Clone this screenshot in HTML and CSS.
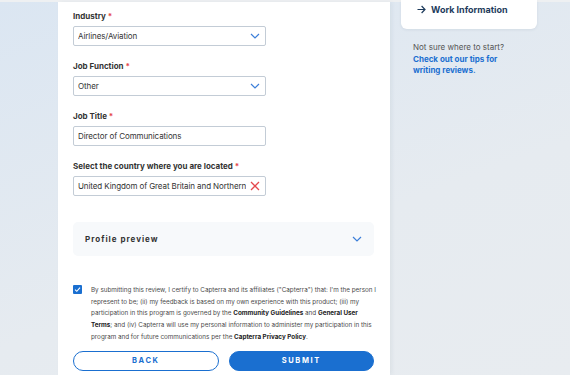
FILE: index.html
```html
<!DOCTYPE html>
<html lang="en">
<head>
<meta charset="utf-8">
<title>Review - Work Information</title>
<link rel="stylesheet" href="styles.css">
</head>
<body>
<div class="page">
  <div class="gutter"></div>
  <main class="panel">
    <div class="field">
      <label class="label">Industry <span class="req">*</span></label>
      <div class="input">
        <span class="value">Airlines/Aviation</span>
        <svg class="chev" width="10" height="6" viewBox="0 0 10 6"><path d="M1 1 L5 5 L9 1" fill="none" stroke="#3d7fd9" stroke-width="1.2"/></svg>
      </div>
    </div>
    <div class="field">
      <label class="label">Job Function <span class="req">*</span></label>
      <div class="input">
        <span class="value">Other</span>
        <svg class="chev" width="10" height="6" viewBox="0 0 10 6"><path d="M1 1 L5 5 L9 1" fill="none" stroke="#3d7fd9" stroke-width="1.2"/></svg>
      </div>
    </div>
    <div class="field">
      <label class="label">Job Title <span class="req">*</span></label>
      <div class="input">
        <span class="value">Director of Communications</span>
      </div>
    </div>
    <div class="field">
      <label class="label">Select the country where you are located <span class="req">*</span></label>
      <div class="input">
        <span class="value clip">United Kingdom of Great Britain and Northern Ireland</span>
        <svg class="clear" width="10" height="10" viewBox="0 0 10 10"><path d="M1 1 L9 9 M9 1 L1 9" fill="none" stroke="#e5484d" stroke-width="1.3"/></svg>
      </div>
    </div>

    <div class="preview">
      <span class="preview-title">Profile preview</span>
      <svg width="10" height="6" viewBox="0 0 10 6"><path d="M1 1 L5 5 L9 1" fill="none" stroke="#3d7fd9" stroke-width="1.2"/></svg>
    </div>

    <div class="consent">
      <span class="check">
        <svg width="9" height="9" viewBox="0 0 9 9"><path d="M2 4.6 L3.8 6.3 L7 2.6" fill="none" stroke="#fff" stroke-width="1.1"/></svg>
      </span>
      <p class="consent-text">By submitting this review, I certify to Capterra and its affiliates ("Capterra") that: I'm the person I<br>represent to be; (ii) my feedback is based on my own experience with this product; (iii) my<br>participation in this program is governed by the <b>Community Guidelines</b> and <b>General User</b><br><b>Terms</b>; and (iv) Capterra will use my personal information to administer my participation in this<br>program and for future communications per the <b>Capterra Privacy Policy</b>.</p>
    </div>

    <div class="actions">
      <button class="btn btn-back">BACK</button>
      <button class="btn btn-submit">SUBMIT</button>
    </div>
  </main>
  <aside class="side">
    <div class="card">
      <svg class="arrow" width="9" height="9" viewBox="0 0 9 9"><path d="M0.5 4.5 H8 M4.6 1 L8 4.5 L4.6 8" fill="none" stroke="#1d3b5c" stroke-width="1.2"/></svg>
      <span class="card-text">Work Information</span>
    </div>
    <div class="tips">
      <p class="tips-q">Not sure where to start?</p>
      <a class="tips-link" href="#">Check out our tips for writing reviews.</a>
    </div>
  </aside>
</div>
</body>
</html>
```

FILE: styles.css
```css
* { box-sizing: border-box; }
html, body { margin: 0; padding: 0; }
body {
  width: 570px;
  height: 375px;
  overflow: hidden;
  font-family: Inter, "Noto Sans", "Liberation Sans", sans-serif;
  background: linear-gradient(160deg, #dbe6f2 0%, #e6ebf0 60%, #e8ecf0 100%);
  color: #2b2b2b;
}
.page {
  display: flex;
  height: 375px;
  border-top: 2px solid #eef0f2;
}
.gutter { width: 58px; flex: none; }
.panel {
  width: 332px;
  flex: none;
  background: #fff;
  padding: 9px 16px 0 15px;
  box-shadow: 2px 0 4px rgba(40, 60, 90, 0.06);
}
.field { margin-bottom: 15px; }
.label {
  display: block;
  font-size: 8px;
  font-weight: 700;
  line-height: 11px;
  color: #333;
  margin-bottom: 4px;
}
.req { color: #e5484d; }
.input {
  width: 193px;
  height: 20px;
  border: 1px solid #c3ccd6;
  border-radius: 2px;
  display: flex;
  align-items: center;
  padding: 0 4px 0 4px;
  gap: 4px;
}
.value {
  flex: 1;
  font-size: 8px;
  letter-spacing: -0.1px;
  color: #333;
  white-space: nowrap;
  overflow: hidden;
}
.chev { flex: none; margin-right: 1px; }
.clear { flex: none; margin-right: 1px; }

.preview {
  margin-top: 26px;
  width: 301px;
  height: 34px;
  background: #f7f9fb;
  border-radius: 5px;
  display: flex;
  align-items: center;
  justify-content: space-between;
  padding: 0 12px 0 12px;
}
.preview-title {
  font-size: 8px;
  font-weight: 700;
  letter-spacing: 1px;
  color: #333;
}

.consent {
  margin-top: 29px;
  display: flex;
  gap: 9px;
  width: 301px;
}
.check {
  flex: none;
  width: 9px;
  height: 9px;
  background: #1a6fd0;
  border-radius: 1px;
  margin-top: 0;
  display: flex;
}
.consent-text {
  margin: 0;
  font-size: 6.3px;
  line-height: 11.7px;
  color: #4a4a4a;
  white-space: nowrap;
}
.consent-text b { color: #222; }

.actions {
  margin-top: 7px;
  display: flex;
  gap: 10px;
  width: 301px;
}
.btn {
  flex: 1;
  height: 20px;
  border-radius: 10px;
  font-family: inherit;
  font-size: 7.5px;
  font-weight: 700;
  letter-spacing: 1.6px;
  cursor: pointer;
}
.btn-back {
  background: #fff;
  border: 1px solid #1a6fd0;
  color: #1a6fd0;
}
.btn-submit {
  background: #1a6fd0;
  border: 1px solid #1a6fd0;
  color: #fff;
}

.side {
  flex: 1;
  padding: 0 33px 0 11px;
}
.card {
  width: 136px;
  height: 29px;
  margin-top: -2px;
  background: #fff;
  border-radius: 0 0 6px 6px;
  box-shadow: 0 1px 3px rgba(40, 60, 90, 0.08);
  display: flex;
  align-items: center;
  gap: 5px;
  padding: 0 0 10px 16px;
}
.arrow { flex: none; }
.card-text {
  font-size: 9px;
  font-weight: 700;
  color: #1d3b5c;
}
.tips { padding: 13px 0 0 12px; }
.tips-q {
  margin: 0;
  font-size: 8px;
  line-height: 11.5px;
  color: #555;
}
.tips-link {
  display: block;
  width: 100px;
  font-size: 8px;
  line-height: 11.5px;
  font-weight: 700;
  color: #1a6fd0;
  text-decoration: none;
}
```
